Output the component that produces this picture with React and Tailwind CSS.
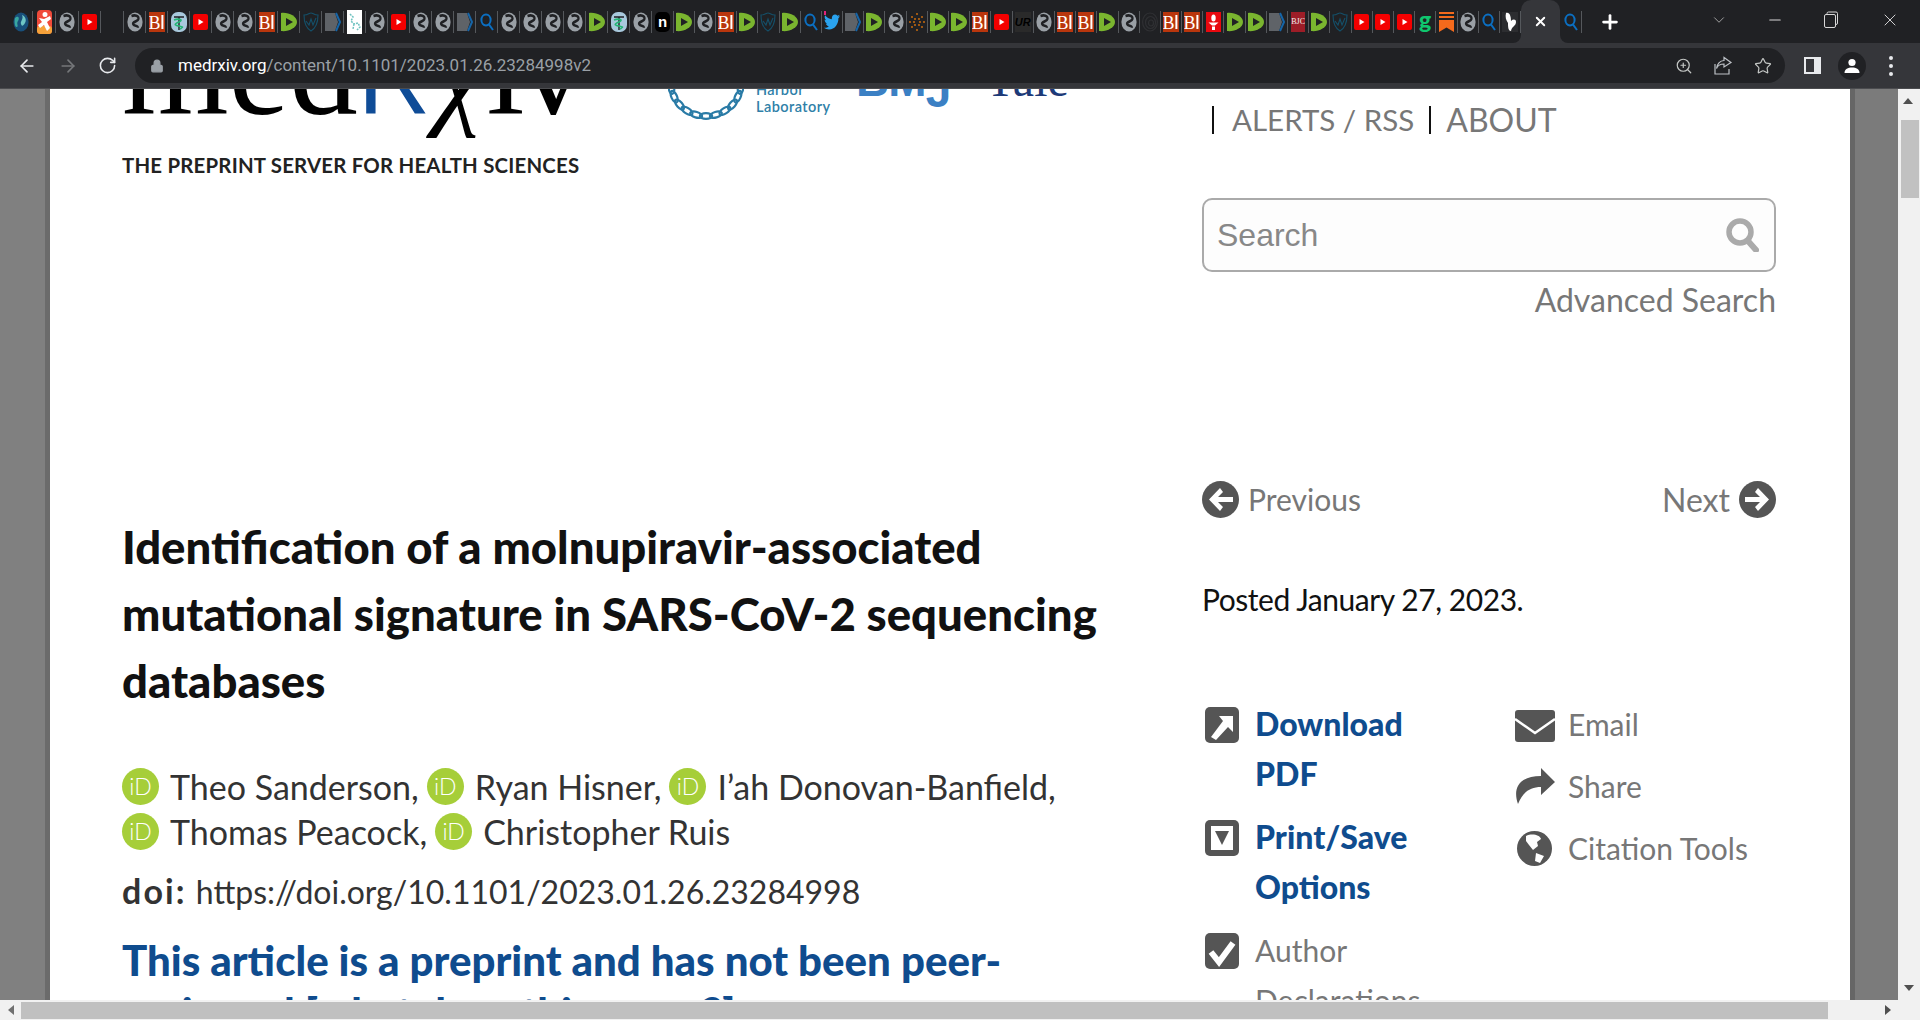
import React from 'react';
import { ArrowLeft, ArrowRight, RotateCw, Lock, ZoomIn, Star, X, Plus, ChevronDown, Minus } from 'lucide-react';
import { FaTwitter } from 'react-icons/fa';

const Globe = () => (
  <svg width="16" height="20" viewBox="0 0 16 16" preserveAspectRatio="none">
    <circle cx="8" cy="8" r="7.6" fill="#9aa0a6" />
    <path d="M4.500 3.200C8 2 12 3 11.500 5.500S5.500 7.500 6 9.500 11 10.500 11 12.500" fill="none" stroke="#202124" strokeWidth="2.2" />
  </svg>
);
const Biorxiv = () => (
  <svg width="16" height="20" viewBox="0 0 16 20">
    <rect width="16" height="20" fill="#b9360d" />
    <text x="-0.5" y="16.5" fontSize="18" fill="#fff" fontFamily="'Liberation Serif',serif">B</text>
    <rect x="12.400" y="3" width="2" height="14" fill="#fff" />
  </svg>
);
const Green = () => (
  <svg width="16" height="20" viewBox="0 0 16 20">
    <path d="M0 1C7 0 16 4 16 10S7 20 0 19Z" fill="#7ab52f" />
    <path d="M5 6L12 10 5 14Z" fill="#202124" />
  </svg>
);
const Shield = () => (
  <svg width="16" height="20" viewBox="0 0 16 20" fill="none" stroke="#14506a" strokeWidth="1.1">
    <path d="M1 3C5 3 6 1 8 1S11 3 15 3C15 11 13 16 8 19 3 16 1 11 1 3Z" />
    <path d="M3 9L6 13 8 7 10 13 13 6" />
  </svg>
);
const Pent = () => (
  <svg width="16" height="20" viewBox="0 0 16 20">
    <path d="M0 1H10L13 10 10 19H0Z" fill="#5f6368" />
    <path d="M11 1L15 10 11 19" fill="none" stroke="#1565a8" strokeWidth="2" />
  </svg>
);
const Search = () => (
  <svg width="14" height="18" viewBox="0 0 14 18" fill="none" stroke="#0b6fc2" strokeWidth="2">
    <ellipse cx="6" cy="7" rx="4.6" ry="5.4" />
    <path d="M9 11.5L13 17" />
  </svg>
);
const Caduceus = () => (
  <svg width="16" height="20" viewBox="0 0 16 20">
    <rect width="16" height="20" rx="7" fill="#a8c8dc" />
    <path d="M3 5H13M8 5V18" stroke="#202124" strokeWidth="1.4" />
    <path d="M3 8C8 6 13 8 8 10S3 13 8 14 12 15 9 17" fill="none" stroke="#22b573" strokeWidth="1.6" />
  </svg>
);
const Yt = () => (
  <svg width="15" height="16" viewBox="0 0 15 16">
    <rect width="15" height="16" rx="2" fill="#f40000" />
    <path d="M5.5 5L10.5 8 5.5 11Z" fill="#fff" />
  </svg>
);
const Chem = () => (
  <svg width="15" height="24" viewBox="0 0 15 24">
    <rect width="15" height="24" fill="#fff" />
    <path d="M3 4L6 7 4 11 7 14 11 13 13 17 10 20M7 14L6 19" fill="none" stroke="#6fc3c0" strokeWidth="1.5" strokeDasharray="2 1" />
  </svg>
);
const Nyt = () => (
  <div className="w-[15px] h-[20px] rounded-[5px] bg-black text-white text-[15px] font-bold leading-[20px] text-center font-['Liberation_Sans',sans-serif]">n</div>
);
const Tw = () => (
  <div className="relative">
    <FaTwitter size={16} color="#2aa3ef" style={{ transform: 'scaleY(1.15)' }} />
    <div className="absolute left-0 -top-[3px] w-[2px] h-[4px] bg-[#e0247a]" />
  </div>
);
const Dots = () => (
  <svg width="16" height="20" viewBox="0 0 16 20" fill="#d9730d">
    {[[8, 2], [3, 5], [13, 5], [6, 7], [10, 7], [1, 10], [5, 10], [11, 10], [15, 10], [6, 13], [10, 13], [3, 15], [13, 15], [8, 18]].map(([x, y], i) => (
      <circle key={i} cx={x} cy={y} r="0.9" />
    ))}
  </svg>
);
const Wr = () => (
  <div className="w-[16px] h-[20px] bg-[#2a2a2a] text-black text-[11px] italic font-black leading-[20px] text-center font-['Liberation_Sans',sans-serif]">UR</div>
);
const Spiral = () => (
  <svg width="16" height="20" viewBox="0 0 16 20" fill="none" stroke="#2f3033" strokeWidth="1.2">
    <ellipse cx="8" cy="10" rx="7.4" ry="9" />
    <ellipse cx="8.5" cy="10.5" rx="5" ry="6" />
    <ellipse cx="9" cy="11" rx="2.5" ry="3" />
  </svg>
);
const Torch = () => (
  <svg width="15" height="20" viewBox="0 0 15 20">
    <rect width="15" height="20" fill="#e8090f" />
    <ellipse cx="7.5" cy="6" rx="2.2" ry="3.6" fill="#fff" />
    <path d="M2.5 10.5H12.5L9 13.5H6ZM6 14.5H9V18H6Z" fill="#fff" />
  </svg>
);
const Bjc = () => (
  <div className="w-[14px] h-[20px] bg-[#9d1d27] text-[#eee] text-[8px] leading-[20px] text-center font-['Liberation_Serif',serif] overflow-hidden">BJC</div>
);
const GLetter = () => (
  <div className="w-[14px] h-[22px] text-[#0fc66e] text-[23px] font-black leading-[16px] text-center font-['Lato',sans-serif]">g</div>
);
const Mark = () => (
  <svg width="15" height="20" viewBox="0 0 15 20" fill="#f46a1c">
    <rect width="15" height="2" />
    <rect y="4" width="15" height="2" />
    <path d="M0 8H15V20L7.5 15.5 0 20Z" />
  </svg>
);
const Butterfly = () => (
  <svg width="16" height="20" viewBox="0 0 16 20">
    <rect width="16" height="20" fill="#2c2d30" />
    <path d="M4 1C8 0 9 5 9 9 11 7 14 7 14 10 14 14 10 14 9 19 6 19 6 14 6 11 4 8 3 5 4 1Z" fill="#fff" />
  </svg>
);
const Earth = () => (
  <svg width="16" height="24" viewBox="0 0 16 20">
    <ellipse cx="8" cy="10" rx="7.6" ry="9.5" fill="#184f7a" />
    <path d="M2 6C5 3 7 6 5 9S6 14 4 15 1 10 2 6Z" fill="#39a7a0" />
    <path d="M9 3C12 4 14 8 12 11S9 15 8 12 11 7 9 3Z" fill="#6fc6c4" />
  </svg>
);
const Figure = () => (
  <svg width="15" height="24" viewBox="0 0 15 24">
    <rect width="15" height="24" rx="4" fill="#f04a3a" />
    <rect y="16" width="15" height="8" rx="3" fill="#f5a13a" />
    <path d="M8 2A2.4 2.4 0 1 1 8 7 2.4 2.4 0 1 1 8 2ZM2 8L7 9 13 6 14 9 10 12 13 18 10 21 7 15 3 18 1 15 5 12Z" fill="#fff" />
  </svg>
);

const ICONS = { G: Globe, B: Biorxiv, D: Green, S: Shield, P: Pent, Q: Search, C: Caduceus, Y: Yt, X: Chem, N: Nyt, T: Tw, O: Dots, W: Wr, H: Spiral, R: Torch, J: Bjc, L: GLetter, M: Mark, F: Butterfly };

const GROUP_TWO = 'GBCYGGBDSPXGYGGPQGGGGDCGNDGBDSDQTPDGODDBYWGBBDGHBBRDDPJDSYYYLMGQF'.split('');

function Tab({ k, cls }) {
  const I = ICONS[k];
  return (
    <div className={`${cls} h-[22px] shrink-0 flex items-center justify-center border-r border-[#55585c]`}>
      <I />
    </div>
  );
}

function TabStrip() {
  return (
    <div className="h-[43px] bg-[#202124] flex items-center shrink-0 pl-[10px]">
      <div className="flex items-center w-[114.4px] shrink-0">
        <div className="w-[23px] h-[22px] flex items-center justify-center border-r border-[#55585c] shrink-0"><Earth /></div>
        <div className="w-[23px] h-[22px] flex items-center justify-center border-r border-[#55585c] shrink-0"><Figure /></div>
        <Tab k="G" cls="w-[23px]" />
        <Tab k="Y" cls="w-[22px]" />
      </div>
      <div className="flex items-center shrink-0 border-l border-[#55585c] -ml-px">
        {GROUP_TWO.map((k, i) => <Tab key={i} k={k} cls={i < 24 ? 'w-[22px]' : 'w-[21.2px]'} />)}
      </div>
      <div className="relative w-[39px] h-[43px] shrink-0 bg-[#35363a] rounded-t-[10px] flex items-center justify-center">
        <div className="absolute -left-[8px] bottom-0 w-[8px] h-[8px] bg-[#35363a]"><div className="w-full h-full bg-[#202124] rounded-br-[8px]" /></div>
        <div className="absolute -right-[8px] bottom-0 w-[8px] h-[8px] bg-[#35363a]"><div className="w-full h-full bg-[#202124] rounded-bl-[8px]" /></div>
        <X size={15} color="#fff" strokeWidth={3} />
      </div>
      <div className="w-[22px] h-[22px] shrink-0 flex items-center justify-center border-r border-[#55585c]"><Search /></div>
      <div className="ml-[17px] shrink-0"><Plus size={22} color="#fff" strokeWidth={3} /></div>
      <div className="ml-[89px] -mt-[4px] shrink-0"><ChevronDown size={18} color="#c8c8c8" strokeWidth={1} /></div>
      <div className="ml-[38px] -mt-[4px] shrink-0"><Minus size={18} color="#d8d8d8" strokeWidth={1.4} /></div>
      <div className="ml-[40px] -mt-[4px] shrink-0">
        <svg width="14" height="18" viewBox="0 0 14 18" fill="none" stroke="#d8d8d8" strokeWidth="1">
          <rect x="0.5" y="3.5" width="11" height="13" rx="1.5" />
          <path d="M3 3V2.5A1.5 1.5 0 0 1 4.5 1H12A1.5 1.5 0 0 1 13.5 2.5V12A1.5 1.5 0 0 1 12 13.5" />
        </svg>
      </div>
      <div className="ml-[42px] -mt-[4px] shrink-0"><X size={20} color="#e0e0e0" strokeWidth={1.1} /></div>
    </div>
  );
}

function Toolbar() {
  return (
    <div className="h-[46px] bg-[#35363a] border-b border-[#4b4c4f] shrink-0 flex items-center">
      <div className="w-[135px] flex items-center pl-[17px] shrink-0">
        <ArrowLeft size={20} color="#e8eaed" strokeWidth={2} />
        <div className="ml-[21px]"><ArrowRight size={20} color="#75777a" strokeWidth={2} /></div>
        <div className="ml-[20px]"><RotateCw size={19} color="#e8eaed" strokeWidth={2} /></div>
      </div>
      <div className="h-[35px] w-[1650px] shrink-0 bg-[#202124] rounded-full flex items-center">
        <div className="ml-[15px] w-[14px]"><Lock size={14} color="#9aa0a6" fill="#9aa0a6" /></div>
        <div className="ml-[14px] text-[17px] text-[#9aa0a6] font-['Roboto',sans-serif]">
          <span className="text-white">medrxiv.org</span>/content/10.1101/2023.01.26.23284998v2
        </div>
        <div className="ml-auto flex items-center gap-[21px] pr-[13px]">
          <ZoomIn size={18} color="#c4c7c5" strokeWidth={1.6} />
          <svg width="19" height="19" viewBox="0 0 19 19" fill="none" stroke="#bdc1c6" strokeWidth="1.2">
            <path d="M10 11V8C6 8 3.5 10 2.5 12.5 3 8 6 4.5 10 4.5V1.5L17 6.5Z" />
            <path d="M1 8V18H15V13" />
          </svg>
          <Star size={18} color="#c4c7c5" strokeWidth={1.6} />
        </div>
      </div>
      <div className="ml-[19px] w-[17px] h-[17px] bg-[#e8eaed] flex items-center pl-[2px] shrink-0">
        <div className="w-[8px] h-[13px] bg-[#35363a]" />
      </div>
      <div className="ml-[17px] w-[28px] h-[28px] rounded-full bg-[#202124] flex items-center justify-center shrink-0">
        <svg width="16" height="16" viewBox="0 0 16 16" fill="#fff">
          <circle cx="8" cy="4.5" r="3.6" />
          <path d="M0.5 15C0.5 11 4 9.5 8 9.5S15.500 11 15.500 15Z" />
        </svg>
      </div>
      <div className="ml-[23px] flex flex-col gap-[4px] shrink-0">
        <div className="w-[4px] h-[4px] rounded-full bg-[#e8eaed]" />
        <div className="w-[4px] h-[4px] rounded-full bg-[#e8eaed]" />
        <div className="w-[4px] h-[4px] rounded-full bg-[#e8eaed]" />
      </div>
    </div>
  );
}

function Orcid() {
  return (
    <div className="w-[37px] h-[37px] rounded-full bg-[#a6ce39] text-white text-[23px] font-light leading-[37px] text-center shrink-0 font-['Lato',sans-serif]">iD</div>
  );
}

function Author({ name }) {
  return (
    <div className="flex items-center gap-[11px]">
      <Orcid />
      <span>{name}</span>
    </div>
  );
}

const LINKS = Array.from({ length: 11 }, (_, i) => {
  const a = (Math.PI * (i + 0.5)) / 11;
  return { x: 38 + 35 * Math.cos(a), y: -6 + 33 * Math.sin(a), r: (a * 180) / Math.PI + 90 };
});

function Chain() {
  return (
    <svg width="76" height="31" viewBox="0 0 76 31" fill="none" stroke="#2a7ba6" strokeWidth="2.2">
      {LINKS.map((l, i) => (
        <ellipse key={i} cx={l.x} cy={l.y} rx="6.2" ry="2.800" transform={`rotate(${l.r} ${l.x} ${l.y})`} />
      ))}
    </svg>
  );
}

function Header() {
  return (
    <div className="h-[100px] flex">
      <div className="w-[546px] shrink-0">
        <div className="h-[58px] -mt-[21px] leading-[0px] whitespace-nowrap text-black font-['Liberation_Serif',serif]">
          <span className="text-[137px]">med</span>
          <span className="text-[100px] text-[#0f4c97] font-['Liberation_Sans',sans-serif]">R</span>
          <span className="text-[112px] italic ml-[5px]">χ</span>
          <span className="text-[137px] ml-[2px] -tracking-[6px]">iv</span>
        </div>
        <div className="mt-[29px] text-[20.400px] font-bold leading-[20px] text-[#222] tracking-[0.01em] whitespace-nowrap">THE PREPRINT SERVER FOR HEALTH SCIENCES</div>
      </div>
      <div className="w-[76px] h-[31px] shrink-0 overflow-hidden">
        <Chain />
      </div>
      <div className="w-[100px] shrink-0 ml-[12px] -mt-[7px] text-[#2f7fa8] text-[14.500px] font-semibold leading-[15px] tracking-[0.03em] font-['Lato',sans-serif]">
        <div>Harbor</div>
        <div className="mt-[2px]">Laboratory</div>
      </div>
      <div className="h-[23px] w-[127px] shrink-0 overflow-visible text-[#3b80c4] text-[46px] font-bold leading-[0px] -mt-[9px] tracking-[-0.02em] font-['Liberation_Sans',sans-serif]">
        BM<span className="relative top-[11px]">J</span>
      </div>
      <div className="h-[10px] text-[#1d3a78] text-[48px] leading-[0px] -mt-[9px] font-['Liberation_Serif',serif]">Yale</div>
    </div>
  );
}

function LeftColumn() {
  return (
    <div className="w-[1080px] shrink-0">
      <Header />
      <h1 className="mt-[324px] text-[45.500px] leading-[67px] font-black text-[#111] whitespace-nowrap">
        Identification of a molnupiravir-associated<br />
        mutational signature in SARS-CoV-2 sequencing<br />
        databases
      </h1>
      <div className="mt-[50px] text-[34px] leading-[45px] text-[#333] whitespace-nowrap">
        <div className="flex gap-[8px] h-[45px]">
          <Author name="Theo Sanderson," />
          <Author name="Ryan Hisner," />
          <Author name="I’ah Donovan-Banfield," />
        </div>
        <div className="flex gap-[8px] h-[45px]">
          <Author name="Thomas Peacock," />
          <Author name="Christopher Ruis" />
        </div>
      </div>
      <div className="mt-[14px] text-[32px] leading-[45px] text-[#333] whitespace-nowrap">
        <span className="font-bold text-[34px] tracking-[2.1px] mr-[1px]">doi:</span> https://doi.org/10.1101/2023.01.26.23284998
      </div>
      <div className="mt-[20px] text-[42px] leading-[52px] font-black text-[#0f4c8e] whitespace-nowrap">
        This article is a preprint and has not been peer-<br />
        reviewed [what does this mean?].
      </div>
    </div>
  );
}

const Box = ({ children }) => (
  <svg width="34" height="36" viewBox="0 0 34 36">{children}</svg>
);

function RightColumn() {
  return (
    <div className="w-[574px] shrink-0 text-[#777]">
      <div className="mt-[11px] h-[40px] leading-[40px] flex items-center whitespace-nowrap">
        <span className="ml-[10px] w-[2px] h-[28px] bg-[#111]" />
        <span className="ml-[18px] text-[29.500px]">ALERTS / RSS</span>
        <span className="ml-[15px] w-[2px] h-[28px] bg-[#111]" />
        <span className="ml-[15px] text-[32px]">ABOUT</span>
      </div>
      <div className="mt-[58px] h-[74px] border-2 border-[#aaa] rounded-[10px] bg-[#fdfdfd] flex items-center justify-between pl-[13px] pr-[15px]">
        <span className="text-[32px] text-[#888] font-['Liberation_Sans',sans-serif]">Search</span>
        <svg width="33" height="34" viewBox="0 0 33 34" fill="none" stroke="#aaa">
          <circle cx="14" cy="14" r="11" strokeWidth="5.500" />
          <path d="M22 23L30 32" strokeWidth="6" strokeLinecap="round" />
        </svg>
      </div>
      <div className="mt-[8px] h-[40px] text-[32px] leading-[40px] text-right">Advanced Search</div>
      <div className="mt-[161px] h-[37px] flex items-center justify-between">
        <div className="flex items-center gap-[9px] text-[30px]">
          <svg width="37" height="37" viewBox="0 0 37 37">
            <circle cx="18.500" cy="18.500" r="18.500" fill="#555" />
            <path d="M18 7L7 18.500 18 30 21 26 16 21H31V16H16L21 11Z" fill="#fff" />
          </svg>
          <span>Previous</span>
        </div>
        <div className="flex items-center gap-[9px] text-[32px]">
          <span>Next</span>
          <svg width="37" height="37" viewBox="0 0 37 37">
            <circle cx="18.500" cy="18.500" r="18.500" fill="#555" />
            <path d="M19 7L30 18.500 19 30 16 26 21 21H6V16H21L16 11Z" fill="#fff" />
          </svg>
        </div>
      </div>
      <div className="mt-[61px] h-[40px] text-[30px] -tracking-[0.45px] leading-[40px] text-[#111]">Posted January 27, 2023.</div>
      <div className="mt-[80px] flex text-[30px] leading-[50px]">
        <div className="w-[313px] shrink-0 flex flex-col gap-[13px]">
          <div className="flex">
            <div className="w-[53px] pl-[3px] pt-[8px] shrink-0">
              <Box>
                <rect width="34" height="36" rx="5" fill="#555" />
                <path d="M6 30L18 14 14 9H28V25L23 20 11 33Z" fill="#fff" />
              </Box>
            </div>
            <div className="font-black text-[32px] text-[#0f4c8e]">Download<br />PDF</div>
          </div>
          <div className="flex">
            <div className="w-[53px] pl-[3px] pt-[8px] shrink-0">
              <Box>
                <rect width="34" height="36" rx="5" fill="#555" />
                <rect x="6" y="6" width="22" height="24" fill="#fff" />
                <path d="M10 11H24L17 25Z" fill="#555" />
              </Box>
            </div>
            <div className="font-black text-[32px] text-[#0f4c8e]">Print/Save<br />Options</div>
          </div>
          <div className="flex">
            <div className="w-[53px] pl-[3px] pt-[8px] shrink-0">
              <Box>
                <rect width="34" height="36" rx="5" fill="#555" />
                <path d="M6 19L14 29 28 10" fill="none" stroke="#fff" strokeWidth="6" />
              </Box>
            </div>
            <div>Author<br />Declarations</div>
          </div>
        </div>
        <div className="flex-1 flex flex-col gap-[12px]">
          <div className="flex items-center h-[50px]">
            <div className="w-[53px] shrink-0 pt-[4px]">
              <svg width="40" height="32" viewBox="0 0 40 32">
                <rect width="40" height="32" rx="3" fill="#555" />
                <path d="M0 9L20 23 40 9" fill="none" stroke="#fff" strokeWidth="2.500" />
              </svg>
            </div>
            <span>Email</span>
          </div>
          <div className="flex items-center h-[50px]">
            <div className="w-[53px] shrink-0">
              <svg width="40" height="36" viewBox="0 0 40 36" fill="#555">
                <path d="M26 0L40 14 26 27V19C15 19 8 24 3 36 -2 22 2 8 26 8Z" />
              </svg>
            </div>
            <span>Share</span>
          </div>
          <div className="flex items-center h-[50px]">
            <div className="w-[53px] pl-[2px] shrink-0">
              <svg width="35" height="35" viewBox="0 0 35 35">
                <circle cx="17.500" cy="17.500" r="17.500" fill="#555" />
                <path d="M9 5C15 2 23 4 24 8L20 11 21 15 16 19 12 14 9 10Z M19 22L27 25 23 32 18 30Z" fill="#fff" />
              </svg>
            </div>
            <span>Citation Tools</span>
          </div>
        </div>
      </div>
    </div>
  );
}

export default function App() {
  return (
    <div className="w-[1920px] h-[1020px] overflow-hidden flex flex-col bg-white font-['Lato',sans-serif]">
      <TabStrip />
      <Toolbar />
      <div className="flex-1 min-h-0 flex">
        <div className="w-[50px] shrink-0 bg-[#808080] border-r-[5px] border-[#6b6b6b]" />
        <div className="w-[1800px] shrink-0 bg-white overflow-hidden flex pl-[72px] pr-[23px] gap-0">
          <LeftColumn />
          <RightColumn />
        </div>
        <div className="w-[48px] shrink-0 bg-[#7b7b7b] border-l-[5px] border-[#666]" />
        <div className="w-[22px] shrink-0 bg-[#f1f1f1] relative">
          <div className="absolute left-[5px] top-[9px] w-0 h-0 border-x-[5px] border-x-transparent border-b-[6px] border-b-[#505050]" />
          <div className="absolute left-[3px] right-[1px] top-[31px] h-[78px] bg-[#c1c1c1]" />
          <div className="absolute left-[6px] bottom-[9px] w-0 h-0 border-x-[5px] border-x-transparent border-t-[6px] border-t-[#505050]" />
        </div>
      </div>
      <div className="h-[20px] shrink-0 bg-[#f1f1f1] relative">
        <div className="absolute left-[8px] top-[5px] w-0 h-0 border-y-[5px] border-y-transparent border-r-[6px] border-r-[#707070]" />
        <div className="absolute left-[21px] top-[2px] w-[1807px] h-[17px] bg-[#c0c0c0]" />
        <div className="absolute left-[1885px] top-[5px] w-0 h-0 border-y-[5px] border-y-transparent border-l-[6px] border-l-[#505050]" />
      </div>
    </div>
  );
}
